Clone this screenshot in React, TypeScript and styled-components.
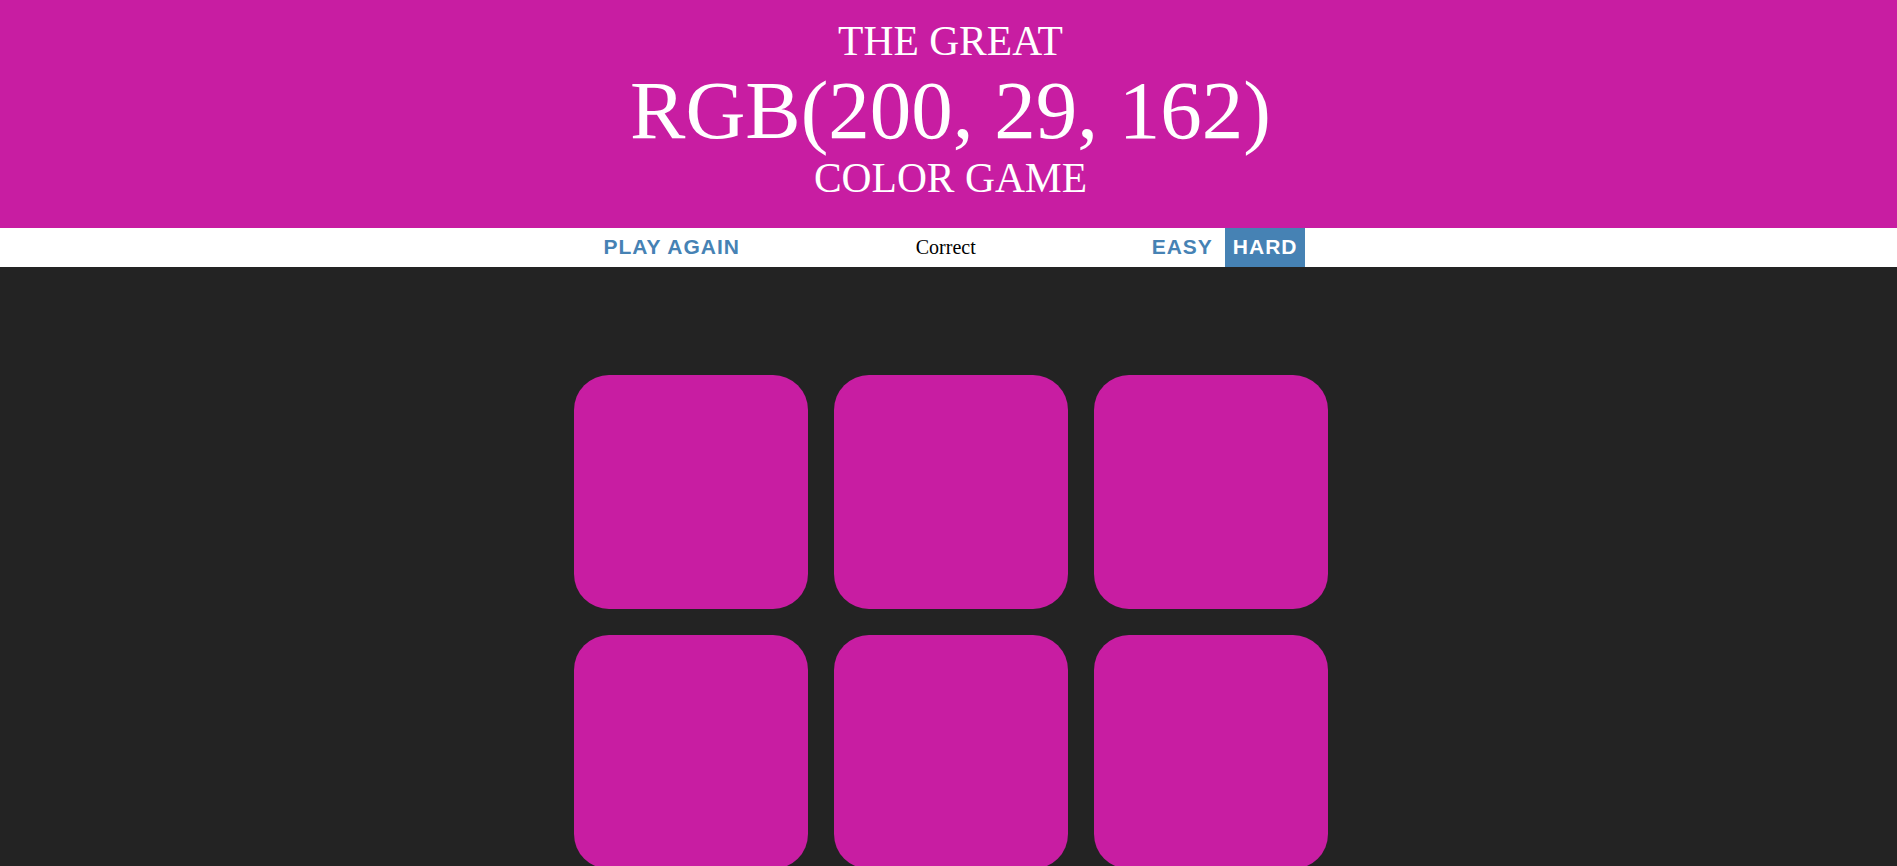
import React from 'react'
import styled, { createGlobalStyle, css } from 'styled-components';

const pick = 'rgb(200, 29, 162)';
// the page is centred a couple of pixels right of the window's middle
const SHIFT = 4;

const GlobalStyle = createGlobalStyle`
	html, body {
		margin: 0;
		padding: 0;
		background-color: #232323;
	}
	body {
		font-family: "Liberation Sans", Arial, sans-serif;
	}
`

const Header = styled.h1<{ $bg: string }>`
	margin: 0;
	padding: 19px 0 26px ${SHIFT}px;
	background-color: ${p => p.$bg};
	color: white;
	text-align: center;
	font-family: "Liberation Serif", "Times New Roman", serif;
	font-weight: normal;
	text-transform: uppercase;
	line-height: 1.1;
`

const Line = styled.span<{ $big?: boolean }>`
	display: block;
	font-size: ${p => (p.$big ? '83px' : '41.5px')};
`

const Stripe = styled.div`
	background-color: white;
	height: 39px;
	padding-left: ${SHIFT}px;
`

const StripeInner = styled.div`
	width: 710px;
	height: 100%;
	margin: 0 auto;
	display: flex;
	justify-content: space-between;
	align-items: stretch;
`

const Button = styled.button<{ $selected?: boolean }>`
	border: none;
	background: none;
	height: 100%;
	padding: 0 8px;
	font-family: "Liberation Sans", Arial, sans-serif;
	font-size: 21px;
	font-weight: 700;
	letter-spacing: 1px;
	text-transform: uppercase;
	color: steelblue;
	cursor: pointer;
	outline: none;
	transition: all 0.3s;
	&:hover {
		color: white;
		background-color: steelblue;
	}
	${p => p.$selected && css`
		color: white;
		background-color: steelblue;
	`}
`

const Message = styled.span`
	display: flex;
	align-items: center;
	font-family: "Liberation Serif", "Times New Roman", serif;
	font-size: 20px;
	color: black;
`

const Modes = styled.div`
	display: flex;
	gap: 4px;
`

const Main = styled.div`
	padding-left: ${SHIFT}px;
`

const Board = styled.div`
	width: 780px;
	margin: 95px auto 20px;
	padding: 13px;
	box-sizing: border-box;
	display: grid;
	grid-template-columns: repeat(3, 234px);
	gap: 26px;
`

const Square = styled.div<{ $color: string }>`
	height: 234px;
	border-radius: 35px;
	background-color: ${p => p.$color};
	cursor: pointer;
	transition: background 0.6s;
`

const App = () => {
	const colors = [pick, pick, pick, pick, pick, pick];
	return (
		<>
			<GlobalStyle />
			<Header $bg={pick}>
				<Line>The Great</Line>
				<Line $big>{pick.toUpperCase()}</Line>
				<Line>Color Game</Line>
			</Header>
			<Stripe>
				<StripeInner>
					<Button>Play Again</Button>
					<Message>Correct</Message>
					<Modes>
						<Button>Easy</Button>
						<Button $selected>Hard</Button>
					</Modes>
				</StripeInner>
			</Stripe>
			<Main>
				<Board>
					{colors.map((c, i) => (
						<Square key={i} $color={c} />
					))}
				</Board>
			</Main>
		</>
	)
}

export default App
